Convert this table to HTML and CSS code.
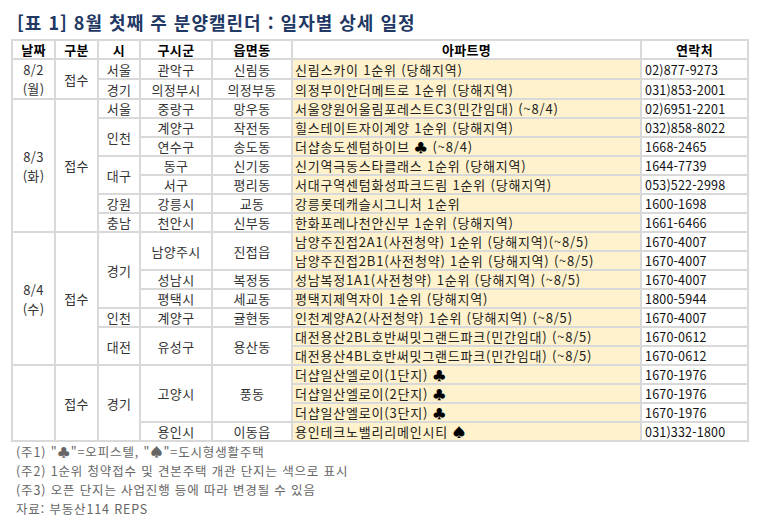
FILE: index.html
```html
<!DOCTYPE html>
<html lang="ko">
<head>
<meta charset="utf-8">
<link rel="stylesheet" href="styles.css">
</head>
<body>
<div class="page">
  <h1 class="title">[표 1] 8월 첫째 주 분양캘린더 : 일자별 상세 일정</h1>
  <table class="cal">
    <colgroup>
      <col class="c-date"><col class="c-type"><col class="c-si"><col class="c-gu"><col class="c-dong"><col class="c-apt"><col class="c-tel">
    </colgroup>
    <thead>
      <tr><th>날짜</th><th>구분</th><th>시</th><th>구시군</th><th>읍면동</th><th>아파트명</th><th>연락처</th></tr>
    </thead>
    <tbody>
      <tr><td class="date" rowspan="2">8/2<br>(월)</td><td rowspan="2">접수</td><td>서울</td><td>관악구</td><td>신림동</td><td class="apt">신림스카이 1순위 (당해지역)</td><td class="tel">02)877-9273</td></tr>
      <tr><td>경기</td><td>의정부시</td><td>의정부동</td><td class="apt">의정부이안더메트로 1순위 (당해지역)</td><td class="tel">031)853-2001</td></tr>

      <tr><td class="date" rowspan="7">8/3<br>(화)</td><td rowspan="7">접수</td><td>서울</td><td>중랑구</td><td>망우동</td><td class="apt">서울양원어울림포레스트C3(민간임대) (~8/4)</td><td class="tel">02)6951-2201</td></tr>
      <tr><td rowspan="2">인천</td><td>계양구</td><td>작전동</td><td class="apt">힐스테이트자이계양 1순위 (당해지역)</td><td class="tel">032)858-8022</td></tr>
      <tr><td>연수구</td><td>송도동</td><td class="apt">더샵송도센텀하이브 <span class="suit">♣</span> (~8/4)</td><td class="tel">1668-2465</td></tr>
      <tr><td rowspan="2">대구</td><td>동구</td><td>신기동</td><td class="apt">신기역극동스타클래스 1순위 (당해지역)</td><td class="tel">1644-7739</td></tr>
      <tr><td>서구</td><td>평리동</td><td class="apt">서대구역센텀화성파크드림 1순위 (당해지역)</td><td class="tel">053)522-2998</td></tr>
      <tr><td>강원</td><td>강릉시</td><td>교동</td><td class="apt">강릉롯데캐슬시그니처 1순위</td><td class="tel">1600-1698</td></tr>
      <tr><td>충남</td><td>천안시</td><td>신부동</td><td class="apt">한화포레나천안신부 1순위 (당해지역)</td><td class="tel">1661-6466</td></tr>

      <tr><td class="date" rowspan="7">8/4<br>(수)</td><td rowspan="7">접수</td><td rowspan="4">경기</td><td rowspan="2">남양주시</td><td rowspan="2">진접읍</td><td class="apt">남양주진접2A1(사전청약) 1순위 (당해지역)(~8/5)</td><td class="tel">1670-4007</td></tr>
      <tr><td class="apt">남양주진접2B1(사전청약) 1순위 (당해지역) (~8/5)</td><td class="tel">1670-4007</td></tr>
      <tr><td>성남시</td><td>복정동</td><td class="apt">성남복정1A1(사전청약) 1순위 (당해지역) (~8/5)</td><td class="tel">1670-4007</td></tr>
      <tr><td>평택시</td><td>세교동</td><td class="apt">평택지제역자이 1순위 (당해지역)</td><td class="tel">1800-5944</td></tr>
      <tr><td>인천</td><td>계양구</td><td>귤현동</td><td class="apt">인천계양A2(사전청약) 1순위 (당해지역) (~8/5)</td><td class="tel">1670-4007</td></tr>
      <tr><td rowspan="2">대전</td><td rowspan="2">유성구</td><td rowspan="2">용산동</td><td class="apt">대전용산2BL호반써밋그랜드파크(민간임대) (~8/5)</td><td class="tel">1670-0612</td></tr>
      <tr><td class="apt">대전용산4BL호반써밋그랜드파크(민간임대) (~8/5)</td><td class="tel">1670-0612</td></tr>

      <tr><td rowspan="4"></td><td rowspan="4">접수</td><td rowspan="4">경기</td><td rowspan="3">고양시</td><td rowspan="3">풍동</td><td class="apt">더샵일산엘로이(1단지) <span class="suit">♣</span></td><td class="tel">1670-1976</td></tr>
      <tr><td class="apt">더샵일산엘로이(2단지) <span class="suit">♣</span></td><td class="tel">1670-1976</td></tr>
      <tr><td class="apt">더샵일산엘로이(3단지) <span class="suit">♣</span></td><td class="tel">1670-1976</td></tr>
      <tr><td>용인시</td><td>이동읍</td><td class="apt">용인테크노밸리리메인시티 <span class="suit">♠</span></td><td class="tel">031)332-1800</td></tr>
    </tbody>
  </table>
  <div class="notes">
    <p>(주1) "♣"=오피스텔, "♠"=도시형생활주택</p>
    <p>(주2) 1순위 청약접수 및 견본주택 개관 단지는 색으로 표시</p>
    <p>(주3) 오픈 단지는 사업진행 등에 따라 변경될 수 있음</p>
    <p>자료: 부동산114 REPS</p>
  </div>
</div>
</body>
</html>
```

FILE: styles.css
```css
html, body {
  margin: 0;
  padding: 0;
  background: #ffffff;
}

.page {
  padding: 9px 0 0 11px;
  font-family: "Noto Sans CJK KR", "Noto Sans", sans-serif;
}

.title {
  margin: 0 0 4px 6px;
  font-size: 18px;
  line-height: 26px;
  font-weight: bold;
  letter-spacing: 1px;
  color: #1f3864;
}

.cal {
  border-collapse: collapse;
  table-layout: fixed;
  width: 736px;
  font-size: 13px;
  color: #333333;
}

.c-date { width: 43px; }
.c-type { width: 43px; }
.c-si { width: 42px; }
.c-gu { width: 72px; }
.c-dong { width: 80px; }
.c-apt { width: 349px; }
.c-tel { width: 107px; }

.cal th,
.cal td {
  border: 2px solid #d9d9d9;
  padding: 0;
  line-height: 17px;
  text-align: center;
  vertical-align: middle;
  white-space: nowrap;
  overflow: hidden;
  letter-spacing: 0.3px;
}

.cal th {
  font-weight: bold;
  color: #000000;
}

.cal td.date {
  line-height: 19px;
}

.cal td.apt {
  text-align: left;
  padding-left: 2px;
  background: #fff2cc;
  color: #222222;
  letter-spacing: 0.8px;
}

.cal td.tel {
  text-align: left;
  padding-left: 3px;
  font-size: 12.5px;
  letter-spacing: 0.2px;
  color: #111111;
}

.suit {
  color: #000000;
}

.notes {
  margin-left: 5px;
  color: #666666;
  font-size: 12.5px;
  line-height: 19px;
  letter-spacing: 0.85px;
}

.notes p {
  margin: 0;
}
```
